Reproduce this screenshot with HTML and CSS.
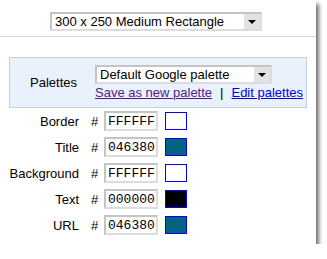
FILE: index.html
```html
<!DOCTYPE html>
<html lang="en">
<head>
    <meta charset="UTF-8">
    <title>Ad colors</title>
    <link rel="stylesheet" href="styles.css">
</head>
<body>
  <div class="panel">
    <div class="size-row">
      <div class="select size-select">
        <span class="select-text">300 x 250 Medium Rectangle</span>
        <span class="select-btn"><span class="arrow"></span></span>
      </div>
    </div>

    <div class="palettes">
      <div class="palettes-label">Palettes</div>
      <div class="palettes-right">
        <div class="select palette-select">
          <span class="select-text">Default Google palette</span>
          <span class="select-btn"><span class="arrow"></span></span>
        </div>
        <div class="links">
          <a href="#" class="visited">Save as new palette</a><span class="sep">|</span><a href="#">Edit palettes</a>
        </div>
      </div>
    </div>

    <div class="colors">
      <div class="row">
        <span class="label">Border</span><span class="hash">#</span>
        <input type="text" value="FFFFFF"><span class="swatch" style="background:#FFFFFF"></span>
      </div>
      <div class="row">
        <span class="label">Title</span><span class="hash">#</span>
        <input type="text" value="046380"><span class="swatch" style="background:#046380"></span>
      </div>
      <div class="row">
        <span class="label">Background</span><span class="hash">#</span>
        <input type="text" value="FFFFFF"><span class="swatch" style="background:#FFFFFF"></span>
      </div>
      <div class="row">
        <span class="label">Text</span><span class="hash">#</span>
        <input type="text" value="000000"><span class="swatch" style="background:#000000"></span>
      </div>
      <div class="row">
        <span class="label">URL</span><span class="hash">#</span>
        <input type="text" value="046380"><span class="swatch" style="background:#046380"></span>
      </div>
    </div>
  </div>
</body>
</html>
```

FILE: styles.css
```css
body {
margin: 0;
background-color: white;
font-family: "Liberation Sans", Arial, sans-serif;
font-size: 13px;
color: black;
}

.panel {
width: 316px;
height: 244px;
background-color: white;
box-shadow: 3px 4px 4px rgba(0, 0, 0, 0.55);
}

.size-row {
padding: 12px 0 5px 50px;
border-bottom: 1px solid #d4d4d4;
}

.select {
display: flex;
height: 19px;
box-sizing: border-box;
border: 2px solid #c4c4c4;
border-right-color: #dcdcdc;
border-bottom-color: #dcdcdc;
background-color: white;
}

.size-select {
width: 212px;
}

.select-text {
flex: 1;
line-height: 15px;
padding-left: 3px;
white-space: nowrap;
overflow: hidden;
}

.select-btn {
width: 16px;
background-color: #e2e2e2;
display: flex;
align-items: center;
justify-content: center;
}

.arrow {
width: 0;
height: 0;
border-left: 4px solid transparent;
border-right: 4px solid transparent;
border-top: 4px solid black;
}

.palettes {
display: flex;
align-items: center;
margin: 20px 9px 0 9px;
height: 51px;
box-sizing: border-box;
border: 1px solid #c8d0d8;
background-color: #e8f1fc;
padding-left: 20px;
}

.palettes-label {
width: 65px;
}

.palettes-right {
padding-top: 1px;
}

.palette-select {
width: 177px;
}

.links {
margin-top: 1px;
line-height: 16px;
}

.links a {
color: #0000ee;
}

.links a.visited {
color: #551a8b;
}

.sep {
margin: 0 8px;
}

.colors {
padding-top: 0;
}

.row {
display: flex;
align-items: center;
height: 26px;
}

.label {
width: 79px;
text-align: right;
}

.hash {
width: 25px;
padding-left: 12px;
box-sizing: border-box;
}

.row input {
width: 54px;
height: 20px;
box-sizing: border-box;
margin: 0;
padding: 0 0 0 2px;
border: 2px solid #c4c4c4;
border-right-color: #dcdcdc;
border-bottom-color: #dcdcdc;
font-family: "Liberation Mono", "Courier New", monospace;
font-size: 13px;
color: black;
}

.swatch {
width: 22px;
height: 18px;
box-sizing: border-box;
margin-left: 7px;
border: 1px solid #0000ff;
}
```
